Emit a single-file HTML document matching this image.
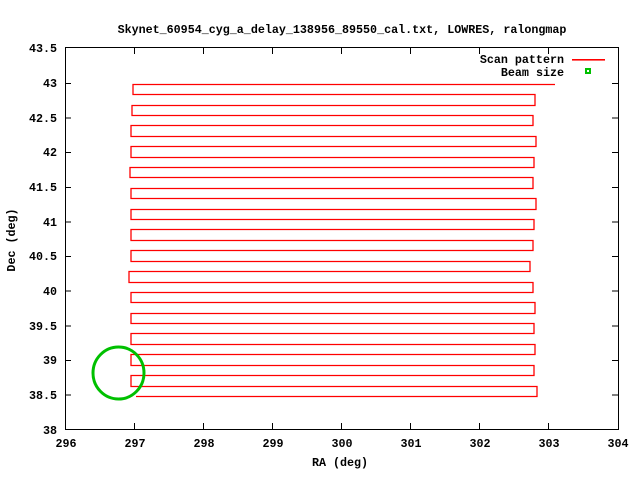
<!DOCTYPE html>
<html><head><style>
body{margin:0;background:#fff}
svg text{font-family:"Liberation Mono",monospace;font-weight:bold;font-size:11.7px;fill:#000}
</style></head><body>
<svg width="640" height="480" viewBox="0 0 640 480" xmlns="http://www.w3.org/2000/svg">
<rect width="640" height="480" fill="#fff"/>
<text x="342" y="33" text-anchor="middle">Skynet_60954_cyg_a_delay_138956_89550_cal.txt, LOWRES, ralongmap</text>
<g stroke="#000" stroke-width="1" fill="none" shape-rendering="crispEdges">
<rect x="65.5" y="47.5" width="553" height="382"/>
<path d="M65 83.5h6M65 118h6M65 152.5h6M65 187.5h6M65 222h6M65 256.5h6M65 291h6M65 326h6M65 360.5h6M65 395h6
M618 83.5h-6M618 118h-6M618 152.5h-6M618 187.5h-6M618 222h-6M618 256.5h-6M618 291h-6M618 326h-6M618 360.5h-6M618 395h-6
M134.5 429v-6M203.5 429v-6M272.5 429v-6M341.5 429v-6M410.5 429v-6M479.5 429v-6M548.5 429v-6
M134.5 48v6M203.5 48v6M272.5 48v6M341.5 48v6M410.5 48v6M479.5 48v6M548.5 48v6"/>
</g>
<g text-anchor="end">
<text x="57" y="52">43.5</text><text x="57" y="87">43</text><text x="57" y="122">42.5</text><text x="57" y="156">42</text><text x="57" y="191">41.5</text><text x="57" y="226">41</text><text x="57" y="260">40.5</text><text x="57" y="295">40</text><text x="57" y="330">39.5</text><text x="57" y="364">39</text><text x="57" y="399">38.5</text><text x="57" y="434">38</text>
</g>
<g text-anchor="middle">
<text x="66" y="447">296</text><text x="135" y="447">297</text><text x="204" y="447">298</text><text x="273" y="447">299</text><text x="342" y="447">300</text><text x="411" y="447">301</text><text x="480" y="447">302</text><text x="549" y="447">303</text><text x="618" y="447">304</text>
<text x="340" y="466">RA (deg)</text>
<text x="0" y="0" transform="translate(15,240) rotate(-90)">Dec (deg)</text>
</g>
<text x="564" y="63" text-anchor="end">Scan pattern</text>
<text x="564" y="76" text-anchor="end">Beam size</text>
<rect x="572" y="59" width="33" height="1.6" fill="#f00"/>
<rect x="585" y="68" width="6" height="6" fill="#00c000"/><rect x="587" y="70" width="2" height="2" fill="#fff"/>
<path fill="none" stroke="#f00" stroke-width="1.3" d="M555 84.5H133V94.5H535V105.5H132V115.5H533V125.5H131V136.5H536V146.5H131V157.5H534V167.5H130V177.5H533V188.5H131V198.5H536V209.5H131V219.5H534V229.5H131V240.5H533V250.5H131V261.5H530V271.5H129V282.5H533V292.5H131V302.5H535V313.5H131V323.5H534V333.5H131V344.5H535V354.5H131V365.5H534V375.5H131V386.5H537V396.5H136"/>
<ellipse cx="118.5" cy="373" rx="25.5" ry="26" fill="none" stroke="#00c000" stroke-width="3"/>
</svg>
</body></html>
